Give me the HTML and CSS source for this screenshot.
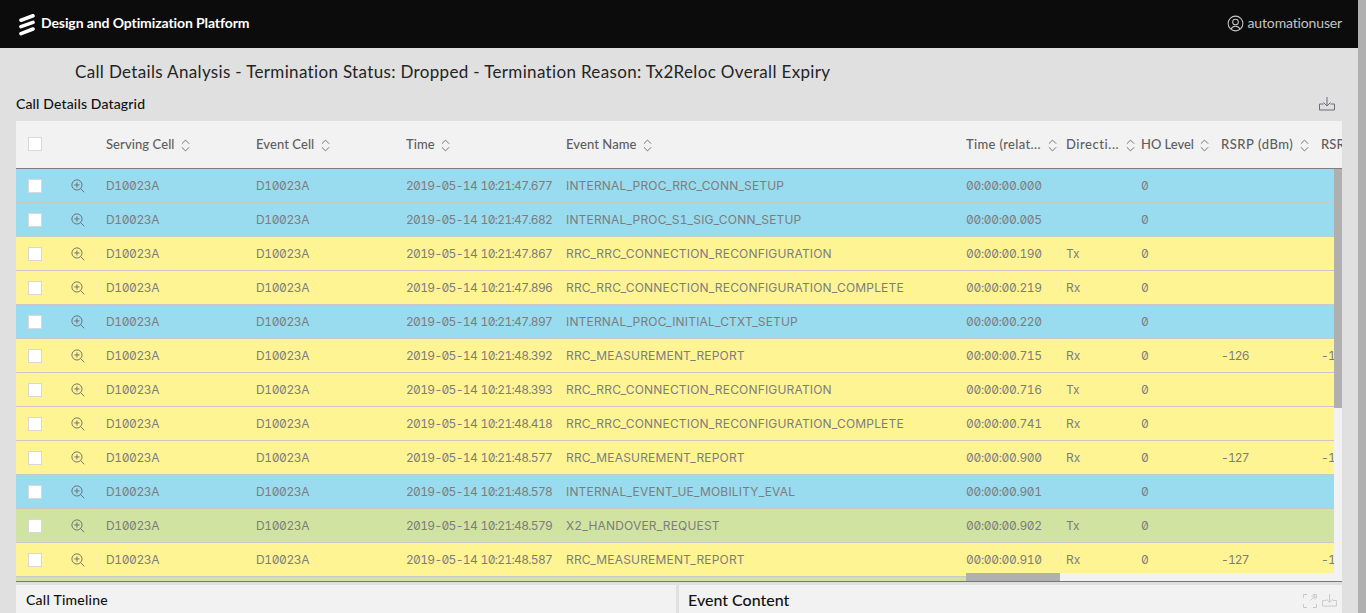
FILE: index.html
```html
<!DOCTYPE html>
<html lang="en">
<head>
<meta charset="utf-8">
<title>Call Details Analysis</title>
<link rel="stylesheet" href="styles.css">
</head>
<body>
<svg class="defs" width="0" height="0" aria-hidden="true">
  <defs>
    <symbol id="zoomi" viewBox="0 0 16 16">
      <circle cx="6.8" cy="6.8" r="5.8" fill="none" stroke="currentColor" stroke-width="1"/>
      <path d="M6.8 3.8v6M3.8 6.8h6M11 11l4.2 4.2" fill="none" stroke="currentColor" stroke-width="1"/>
    </symbol>
    <symbol id="sort" viewBox="0 0 10 14">
      <path d="M1 5l4-4 4 4M1 9l4 4 4-4" fill="none" stroke="currentColor" stroke-width="1"/>
    </symbol>
    <symbol id="dl" viewBox="0 0 16 14">
      <path d="M4.500 7H.5v6h15V7h-4M8 0v9M4.500 5.500L8 9l3.500-3.500" fill="none" stroke="currentColor" stroke-width="1"/>
    </symbol>
  </defs>
</svg>
<header class="topbar">
  <div class="brand">
    <svg class="logo" viewBox="0 0 18 22" width="18" height="22"><path d="M3 6.200L15 1.800M3 12.600L15 8.400M3 19.600L15 15" stroke="#fff" stroke-width="3.600" stroke-linecap="round" fill="none"/></svg>
    <span>Design and Optimization Platform</span>
  </div>
  <div class="user">
    <svg viewBox="0 0 18 18" width="17" height="17"><circle cx="9" cy="9" r="7.800" fill="none" stroke="currentColor" stroke-width="1.100"/><circle cx="9" cy="7.400" r="3" fill="none" stroke="currentColor" stroke-width="1.100"/><path d="M4.300 15c1-2.400 2.600-3 4.700-3s3.700.6 4.700 3" fill="none" stroke="currentColor" stroke-width="1.100"/></svg>
    <span>automationuser</span>
  </div>
</header>
<main class="page">
  <h1 class="title">Call Details Analysis - Termination Status: Dropped - Termination Reason: Tx2Reloc Overall Expiry</h1>
  <div class="gridhead">
    <h2>Call Details Datagrid</h2>
    <svg class="dl"><use href="#dl"/></svg>
  </div>
  <section class="grid">
    <div class="row thead">
      <span class="c0"><i class="check"></i></span><span class="c1"></span>
      <span class="c2">Serving Cell <svg class="sort"><use href="#sort"/></svg></span>
      <span class="c3">Event Cell <svg class="sort"><use href="#sort"/></svg></span>
      <span class="c4">Time <svg class="sort"><use href="#sort"/></svg></span>
      <span class="c5">Event Name <svg class="sort"><use href="#sort"/></svg></span>
      <span class="c6">Time (relat... <svg class="sort"><use href="#sort"/></svg></span>
      <span class="c7">Directi... <svg class="sort"><use href="#sort"/></svg></span>
      <span class="c8">HO Level <svg class="sort"><use href="#sort"/></svg></span>
      <span class="c9">RSRP (dBm) <svg class="sort"><use href="#sort"/></svg></span>
      <span class="c10">RSRQ (dB)</span>
    </div>
    <div class="rows" id="rows">
      <div class="row blue"><span class="c0"><i class="check"></i></span><span class="c1"><svg class="zi"><use href="#zoomi"/></svg></span><span class="c2">D10023A</span><span class="c3">D10023A</span><span class="c4">2019-05-14 10:21:47.677</span><span class="c5">INTERNAL_PROC_RRC_CONN_SETUP</span><span class="c6">00:00:00.000</span><span class="c7"></span><span class="c8">0</span><span class="c9"></span><span class="c10"></span></div>
      <div class="row blue"><span class="c0"><i class="check"></i></span><span class="c1"><svg class="zi"><use href="#zoomi"/></svg></span><span class="c2">D10023A</span><span class="c3">D10023A</span><span class="c4">2019-05-14 10:21:47.682</span><span class="c5">INTERNAL_PROC_S1_SIG_CONN_SETUP</span><span class="c6">00:00:00.005</span><span class="c7"></span><span class="c8">0</span><span class="c9"></span><span class="c10"></span></div>
      <div class="row yellow"><span class="c0"><i class="check"></i></span><span class="c1"><svg class="zi"><use href="#zoomi"/></svg></span><span class="c2">D10023A</span><span class="c3">D10023A</span><span class="c4">2019-05-14 10:21:47.867</span><span class="c5">RRC_RRC_CONNECTION_RECONFIGURATION</span><span class="c6">00:00:00.190</span><span class="c7">Tx</span><span class="c8">0</span><span class="c9"></span><span class="c10"></span></div>
      <div class="row yellow"><span class="c0"><i class="check"></i></span><span class="c1"><svg class="zi"><use href="#zoomi"/></svg></span><span class="c2">D10023A</span><span class="c3">D10023A</span><span class="c4">2019-05-14 10:21:47.896</span><span class="c5">RRC_RRC_CONNECTION_RECONFIGURATION_COMPLETE</span><span class="c6">00:00:00.219</span><span class="c7">Rx</span><span class="c8">0</span><span class="c9"></span><span class="c10"></span></div>
      <div class="row blue"><span class="c0"><i class="check"></i></span><span class="c1"><svg class="zi"><use href="#zoomi"/></svg></span><span class="c2">D10023A</span><span class="c3">D10023A</span><span class="c4">2019-05-14 10:21:47.897</span><span class="c5">INTERNAL_PROC_INITIAL_CTXT_SETUP</span><span class="c6">00:00:00.220</span><span class="c7"></span><span class="c8">0</span><span class="c9"></span><span class="c10"></span></div>
      <div class="row yellow"><span class="c0"><i class="check"></i></span><span class="c1"><svg class="zi"><use href="#zoomi"/></svg></span><span class="c2">D10023A</span><span class="c3">D10023A</span><span class="c4">2019-05-14 10:21:48.392</span><span class="c5">RRC_MEASUREMENT_REPORT</span><span class="c6">00:00:00.715</span><span class="c7">Rx</span><span class="c8">0</span><span class="c9">-126</span><span class="c10">-13</span></div>
      <div class="row yellow"><span class="c0"><i class="check"></i></span><span class="c1"><svg class="zi"><use href="#zoomi"/></svg></span><span class="c2">D10023A</span><span class="c3">D10023A</span><span class="c4">2019-05-14 10:21:48.393</span><span class="c5">RRC_RRC_CONNECTION_RECONFIGURATION</span><span class="c6">00:00:00.716</span><span class="c7">Tx</span><span class="c8">0</span><span class="c9"></span><span class="c10"></span></div>
      <div class="row yellow"><span class="c0"><i class="check"></i></span><span class="c1"><svg class="zi"><use href="#zoomi"/></svg></span><span class="c2">D10023A</span><span class="c3">D10023A</span><span class="c4">2019-05-14 10:21:48.418</span><span class="c5">RRC_RRC_CONNECTION_RECONFIGURATION_COMPLETE</span><span class="c6">00:00:00.741</span><span class="c7">Rx</span><span class="c8">0</span><span class="c9"></span><span class="c10"></span></div>
      <div class="row yellow"><span class="c0"><i class="check"></i></span><span class="c1"><svg class="zi"><use href="#zoomi"/></svg></span><span class="c2">D10023A</span><span class="c3">D10023A</span><span class="c4">2019-05-14 10:21:48.577</span><span class="c5">RRC_MEASUREMENT_REPORT</span><span class="c6">00:00:00.900</span><span class="c7">Rx</span><span class="c8">0</span><span class="c9">-127</span><span class="c10">-13</span></div>
      <div class="row blue"><span class="c0"><i class="check"></i></span><span class="c1"><svg class="zi"><use href="#zoomi"/></svg></span><span class="c2">D10023A</span><span class="c3">D10023A</span><span class="c4">2019-05-14 10:21:48.578</span><span class="c5">INTERNAL_EVENT_UE_MOBILITY_EVAL</span><span class="c6">00:00:00.901</span><span class="c7"></span><span class="c8">0</span><span class="c9"></span><span class="c10"></span></div>
      <div class="row green"><span class="c0"><i class="check"></i></span><span class="c1"><svg class="zi"><use href="#zoomi"/></svg></span><span class="c2">D10023A</span><span class="c3">D10023A</span><span class="c4">2019-05-14 10:21:48.579</span><span class="c5">X2_HANDOVER_REQUEST</span><span class="c6">00:00:00.902</span><span class="c7">Tx</span><span class="c8">0</span><span class="c9"></span><span class="c10"></span></div>
      <div class="row yellow"><span class="c0"><i class="check"></i></span><span class="c1"><svg class="zi"><use href="#zoomi"/></svg></span><span class="c2">D10023A</span><span class="c3">D10023A</span><span class="c4">2019-05-14 10:21:48.587</span><span class="c5">RRC_MEASUREMENT_REPORT</span><span class="c6">00:00:00.910</span><span class="c7">Rx</span><span class="c8">0</span><span class="c9">-127</span><span class="c10">-13</span></div>
      <div class="row green"></div>
    </div>
    <div class="vbar"><div class="vthumb"></div></div>
    <div class="hbar"><div class="hthumb"></div></div>
  </section>
  <div class="panels">
    <section class="panel timeline"><h3>Call Timeline</h3></section>
    <section class="panel content"><h3>Event Content</h3>
      <div class="tools">
        <svg viewBox="0 0 14 14" width="14" height="14"><path d="M.5 4V.5H4M10 .5h3.500V4M13.500 10v3.500H10M4 13.500H.5V10M7.500 6.500L12 2M8.500 2H12v3.500" fill="none" stroke="currentColor" stroke-width="1"/></svg>
        <svg class="dl"><use href="#dl"/></svg>
      </div>
    </section>
  </div>
</main>
<div class="pagebar"></div>
</body>
</html>
```
FILE: styles.css
```css
* { box-sizing: border-box; }
html, body { margin: 0; height: 613px; overflow: hidden; }
body { background: #e0e0e0; font-family: "Lato", "Noto Sans", sans-serif; color: #242424; padding-right: 8px; }
.defs { position: absolute; }
.topbar { height: 48px; background: #0c0c0c; display: flex; justify-content: space-between; align-items: center; padding: 0 16px 0 18px; color: #fff; }
.brand { display: flex; align-items: center; gap: 5px; font-size: 14px; font-weight: 700; letter-spacing: -.1px; }
.brand span { margin-bottom: 4px; }
.logo { margin-top: 2px; }
.user { display: flex; align-items: center; gap: 4px; font-size: 14px; letter-spacing: -.15px; color: #c4c4c4; }
.user span { margin-bottom: 3px; }
.user svg { margin-bottom: 1px; }
.page { padding: 0 16px; }
.title { margin: 0; padding: 14px 0 0 59px; height: 44px; font-size: 17px; font-weight: 400; line-height: 20px; letter-spacing: .34px; color: #242424; }
.gridhead { display: flex; justify-content: space-between; align-items: center; height: 29px; padding: 0 7px 6px 0; }
.gridhead h2 { margin: 0; font-size: 14px; font-weight: 500; letter-spacing: .15px; color: #111; }
.dl { width: 16px; height: 14px; color: #6d6d78; }
.grid { position: relative; height: 461px; overflow: hidden; border-bottom: 1px solid #767676; }
.row { display: flex; height: 34px; align-items: center; font-size: 12px; border-bottom: 1px solid #c8c8c8; white-space: nowrap; }
.row > span { display: block; flex: none; overflow: hidden; }
.thead { height: 48px; padding-bottom: 1px; background: #f2f2f2; border-bottom: 1px solid #7e7e7e; font-size: 13px; font-weight: 500; letter-spacing: .08px; color: #5e5e5e; }
.thead .c6 { letter-spacing: .35px; }
.thead .c7 { letter-spacing: .55px; }
.thead .c8 { letter-spacing: -.05px; }
.thead .c9 { letter-spacing: .55px; }
.rows { font-family: "Inter", "DejaVu Sans", sans-serif; font-variant-numeric: slashed-zero tabular-nums; color: #7d7d7d; font-size: 12px; }
.rows .c2, .rows .c3 { letter-spacing: -.4px; }
.rows .c4 { letter-spacing: -.68px; word-spacing: 1px; }
.rows .c5 { letter-spacing: .18px; }
.rows .c6 { letter-spacing: -.33px; }
.rows .c9, .rows .c10 { letter-spacing: -.9px; }
.blue { background: #99dbef; }
.yellow { background: #fff494; }
.green { background: #d0e3a1; }
.c0 { width: 55px; padding-left: 12px; display: flex !important; }
.c1 { width: 35px; }
.c2, .c3 { width: 150px; }
.c4 { width: 160px; }
.c5 { width: 400px; }
.c6 { width: 100px; }
.c7 { width: 75px; }
.c8 { width: 80px; }
.c9 { width: 100px; }
.c10 { width: 100px; }
.check { display: block; width: 14px; height: 14px; background: #fff; border: 1px solid #d8d8d8; }
.zi { display: block; width: 14px; height: 14px; color: #666; }
.sort { width: 9px; height: 13px; color: #666; margin-left: 3px; vertical-align: -3px; }
.vbar { position: absolute; right: 0; top: 48px; bottom: 0; width: 8px; background: #f2f2f2; }
.vthumb { height: 239px; background: #b0b0b0; }
.hbar { position: absolute; left: 950px; right: 0; bottom: 0; height: 8px; background: #f2f2f2; }
.hthumb { width: 94px; height: 8px; background: #b0b0b0; }
.panels { display: flex; gap: 3px; margin-top: 3px; height: 40px; }
.panel { background: #f2f2f2; position: relative; }
.panel h3 { margin: 0; font-size: 14px; font-weight: 500; line-height: 20px; padding-top: 5px; color: #111; }
.timeline { width: 660px; padding-left: 10px; }
.timeline h3 { letter-spacing: .25px; }
.content { flex: 1; padding-left: 9px; display: flex; justify-content: space-between; }
.content h3 { font-size: 16px; }
.tools { display: flex; gap: 5px; padding: 9px 5px 0 0; align-items: flex-start; color: #c8c8c8; }
.tools .dl { color: #c8c8c8; width: 15px; height: 13px; }
.pagebar { position: absolute; top: 0; right: 0; width: 8px; height: 613px; background: #b0b0b0; }
```
